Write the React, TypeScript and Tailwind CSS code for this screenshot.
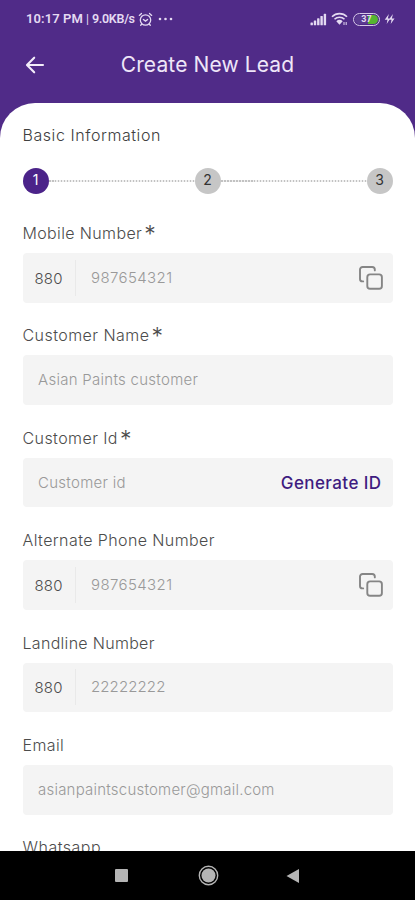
import React from "react";

type FieldProps = {
  label: string;
  required?: boolean;
  prefix?: string;
  placeholder: string;
  labelSpacing: string;
  textSpacing: string;
  action?: React.ReactNode;
};

function CopyIcon() {
  return (
    <svg width="26" height="26" viewBox="0 0 26 26" fill="none" stroke="#858585" strokeWidth="1.9" strokeLinecap="round" strokeLinejoin="round">
      <rect x="9.3" y="9.4" width="14.6" height="14.4" rx="2.8" />
      <path d="M5.2 16.4H4.4a2.4 2.4 0 0 1-2.4-2.4V4.6A2.6 2.6 0 0 1 4.6 2h9.6a2.6 2.6 0 0 1 2.6 2.6v.8" />
    </svg>
  );
}

function Field({ label, required, prefix, placeholder, labelSpacing, textSpacing, action }: FieldProps) {
  return (
    <div className="flex h-[102.4px] shrink-0 flex-col">
      <div className={`flex h-[30px] items-start text-[16px] font-[350] leading-[20px] text-[#4c4c4c] ${labelSpacing}`}>
        <span className="whitespace-nowrap">{label}</span>
        {required && <span className="ml-[2px] text-[23px] leading-[22px] tracking-normal">*</span>}
      </div>
      <div className="flex h-[49.5px] items-center rounded-[4px] bg-[#f4f4f4]">
        {prefix && (
          <div className="flex h-9 w-[53px] items-center border-r border-[#e9e9e9] pl-[12px] pt-[2px] text-[15px] font-[350] tracking-[0.2px] text-[#4c4c4c]">
            {prefix}
          </div>
        )}
        <span className={`flex-1 whitespace-nowrap pl-[15.5px] text-[15px] font-light leading-[20px] text-[#999999] ${textSpacing}`}>
          {placeholder}
        </span>
        {action}
      </div>
    </div>
  );
}

function Step({ n, active }: { n: number; active?: boolean }) {
  return (
    <div className={`flex size-[26px] shrink-0 items-center justify-center rounded-full pb-[2px] text-[14px] ${active ? "bg-[#4b2389] text-white" : "bg-[#c6c6c6] text-[#333333]"}`}>
      {n}
    </div>
  );
}

function StepLine() {
  return <div className="mt-[12px] h-[2px] flex-1 bg-[repeating-linear-gradient(90deg,#c2c2c2_0px,#c2c2c2_1.5px,#f0f0f0_1.5px,#f0f0f0_3px)]" />;
}

function StatusBar() {
  return (
    <div className="flex h-[38px] shrink-0 items-center pl-[26px] pr-[20px] font-['Roboto',sans-serif] text-[#e4daf2]">
      <span className="whitespace-nowrap text-[13px] font-semibold leading-[16px] tracking-[0.1px]">10:17 PM</span>
      <span className="ml-[3px] text-[12px]">|</span>
      <span className="ml-[3px] whitespace-nowrap text-[12.5px] font-semibold leading-[16px] tracking-[-0.3px]">9.0KB/s</span>
      <svg className="ml-[3px]" width="15" height="15" viewBox="0 0 15 15" fill="none" stroke="currentColor" strokeWidth="1.3" strokeLinecap="round">
        <circle cx="7.5" cy="8" r="5.2" />
        <path d="M1.3 3.4 3.5 1.5M13.7 3.4 11.5 1.5M5.4 7.4l2.1 1.7 2.1-1.7M3.6 12.3l-.9 1M11.4 12.3l.9 1" />
      </svg>
      <svg className="ml-[5px]" width="16" height="4" viewBox="0 0 16 4" fill="currentColor">
        <circle cx="2" cy="2" r="1.3" />
        <circle cx="7.5" cy="2" r="1.3" />
        <circle cx="13" cy="2" r="1.3" />
      </svg>
      <div className="ml-auto flex items-center">
        <svg width="17" height="13" viewBox="0 0 17 13" fill="currentColor">
          <rect x="0.5" y="9.5" width="2.4" height="2.8" rx="0.6" />
          <rect x="3.8" y="7.5" width="2.4" height="4.8" rx="0.6" />
          <rect x="7.1" y="5.3" width="2.4" height="7" rx="0.6" />
          <rect x="10.4" y="3" width="2.4" height="9.3" rx="0.6" />
          <rect x="13.7" y="0.8" width="2.4" height="11.5" rx="0.6" />
        </svg>
        <svg className="ml-[4px]" width="17" height="14" viewBox="0 0 17 14" fill="none" stroke="currentColor" strokeWidth="1.6">
          <path d="M1 4.8a10.5 10.5 0 0 1 15 0M3.5 7.3a7 7 0 0 1 10 0" />
          <path d="M5.3 9.2a4.7 4.7 0 0 1 6.4 0L8.5 12.7z" fill="currentColor" stroke="none" />
          <path d="M13 10v3M15.2 10v3" strokeWidth="1" />
        </svg>
        <div className="ml-[5px] flex h-[13px] w-[27px] rounded-full border-[1.5px] border-[#d6cae7] p-[1px]">
          <div className="flex h-full w-full items-center justify-center rounded-full bg-linear-to-r from-[#5b3b91] from-55% to-[#55b530] to-55% text-[9px] font-bold leading-none">
            37
          </div>
        </div>
        <svg className="ml-[4px]" width="11" height="12" viewBox="0 0 12 13" fill="currentColor">
          <path d="M5.3 1 .8 7.3h3L2.9 12l4-6H4.2zM9.7 1 5.2 7.3h3L7.3 12l4.2-6H8.6z" />
        </svg>
      </div>
    </div>
  );
}

export default function App() {
  return (
    <div className="flex h-[900px] w-[415px] flex-col overflow-hidden bg-[#502b88] font-['Inter',sans-serif]">
      <StatusBar />
      <header className="grid h-[64.5px] shrink-0 grid-cols-[96px_1fr_96px] items-start pt-[13px]">
        <svg className="ml-[25px] mt-[4px]" width="20" height="20" viewBox="0 0 20 20" fill="none" stroke="#f3edfa" strokeWidth="2.1" strokeLinecap="round" strokeLinejoin="round">
          <path d="M18 10H2.2M9.2 2.7 2 10l7.2 7.3" />
        </svg>
        <h1 className="whitespace-nowrap text-center text-[21px] font-normal leading-[27px] tracking-[0.12px] text-[#eee6f8]">Create New Lead</h1>
      </header>
      <main className="flex min-h-0 flex-1 flex-col overflow-hidden rounded-t-[35px] bg-white px-[22.5px] pt-[22px]">
        <h2 className="h-[43px] shrink-0 text-[16px] font-[350] leading-[20px] tracking-[0.56px] text-[#404040]">Basic Information</h2>
        <div className="flex h-[55.6px] shrink-0 items-start">
          <Step n={1} active />
          <StepLine />
          <Step n={2} />
          <StepLine />
          <Step n={3} />
        </div>
        <Field label="Mobile Number" required prefix="880" placeholder="987654321" labelSpacing="tracking-[0.36px]" textSpacing="tracking-[0.4px]" action={<div className="mr-[9px]"><CopyIcon /></div>} />
        <Field label="Customer Name" required placeholder="Asian Paints customer" labelSpacing="tracking-[0.45px]" textSpacing="tracking-[0.28px]" />
        <Field label="Customer Id" required placeholder="Customer id" labelSpacing="tracking-[0.42px]" textSpacing="tracking-[0.28px]" action={<button className="mr-[11px] whitespace-nowrap text-[17px] font-medium leading-[22px] tracking-[0.42px] text-[#3f1c80]">Generate ID</button>} />
        <Field label="Alternate Phone Number" prefix="880" placeholder="987654321" labelSpacing="tracking-[0.4px]" textSpacing="tracking-[0.4px]" action={<div className="mr-[9px]"><CopyIcon /></div>} />
        <Field label="Landline Number" prefix="880" placeholder="22222222" labelSpacing="tracking-[0.3px]" textSpacing="tracking-[0.1px]" />
        <Field label="Email" placeholder="asianpaintscustomer@gmail.com" labelSpacing="tracking-[0.4px]" textSpacing="tracking-[0.22px]" />
        <div className="shrink-0 text-[16px] font-[350] leading-[20px] tracking-[0.5px] text-[#4c4c4c]">Whatsapp</div>
      </main>
      <nav className="flex h-[49px] shrink-0 items-center bg-black pl-[115px]">
        <div className="size-[13px] rounded-[1px] bg-[#b5b5b5]" />
        <svg className="ml-[69.5px]" width="21" height="21" viewBox="0 0 21 21">
          <circle cx="10.5" cy="10.5" r="9.2" fill="none" stroke="#b5b5b5" strokeWidth="1.4" />
          <circle cx="10.5" cy="10.5" r="7" fill="#b5b5b5" />
        </svg>
        <svg className="ml-[67.5px]" width="14" height="16" viewBox="0 0 14 16" fill="#b5b5b5">
          <path d="M.5 8 13 1v14z" />
        </svg>
      </nav>
    </div>
  );
}
